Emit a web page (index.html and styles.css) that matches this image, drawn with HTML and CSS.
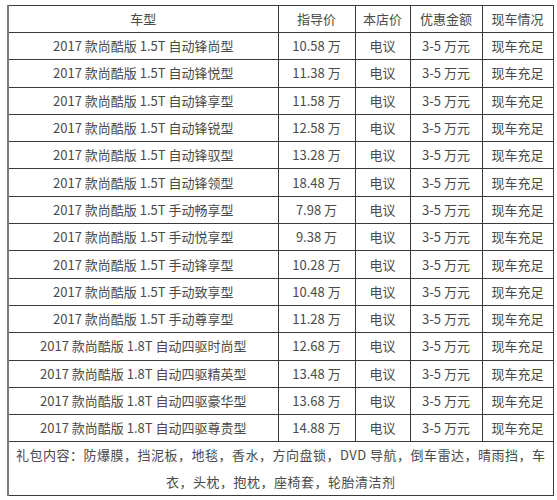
FILE: index.html
```html
<!DOCTYPE html>
<html lang="zh-CN">
<head>
<meta charset="utf-8">
<link rel="stylesheet" href="styles.css">
</head>
<body>
<table class="price-table">
  <colgroup>
    <col class="c-model"><col class="c-guide"><col class="c-store"><col class="c-off"><col class="c-stock">
  </colgroup>
  <thead>
    <tr class="head"><th>车型</th><th>指导价</th><th>本店价</th><th>优惠金额</th><th>现车情况</th></tr>
  </thead>
  <tbody>
    <tr><td>2017 款尚酷版 1.5T 自动锋尚型</td><td>10.58 万</td><td>电议</td><td>3-5 万元</td><td>现车充足</td></tr>
    <tr><td>2017 款尚酷版 1.5T 自动锋悦型</td><td>11.38 万</td><td>电议</td><td>3-5 万元</td><td>现车充足</td></tr>
    <tr><td>2017 款尚酷版 1.5T 自动锋享型</td><td>11.58 万</td><td>电议</td><td>3-5 万元</td><td>现车充足</td></tr>
    <tr><td>2017 款尚酷版 1.5T 自动锋锐型</td><td>12.58 万</td><td>电议</td><td>3-5 万元</td><td>现车充足</td></tr>
    <tr><td>2017 款尚酷版 1.5T 自动锋驭型</td><td>13.28 万</td><td>电议</td><td>3-5 万元</td><td>现车充足</td></tr>
    <tr><td>2017 款尚酷版 1.5T 自动锋领型</td><td>18.48 万</td><td>电议</td><td>3-5 万元</td><td>现车充足</td></tr>
    <tr><td>2017 款尚酷版 1.5T 手动畅享型</td><td>7.98 万</td><td>电议</td><td>3-5 万元</td><td>现车充足</td></tr>
    <tr><td>2017 款尚酷版 1.5T 手动悦享型</td><td>9.38 万</td><td>电议</td><td>3-5 万元</td><td>现车充足</td></tr>
    <tr><td>2017 款尚酷版 1.5T 手动锋享型</td><td>10.28 万</td><td>电议</td><td>3-5 万元</td><td>现车充足</td></tr>
    <tr><td>2017 款尚酷版 1.5T 手动致享型</td><td>10.48 万</td><td>电议</td><td>3-5 万元</td><td>现车充足</td></tr>
    <tr><td>2017 款尚酷版 1.5T 手动尊享型</td><td>11.28 万</td><td>电议</td><td>3-5 万元</td><td>现车充足</td></tr>
    <tr><td>2017 款尚酷版 1.8T 自动四驱时尚型</td><td>12.68 万</td><td>电议</td><td>3-5 万元</td><td>现车充足</td></tr>
    <tr><td>2017 款尚酷版 1.8T 自动四驱精英型</td><td>13.48 万</td><td>电议</td><td>3-5 万元</td><td>现车充足</td></tr>
    <tr><td>2017 款尚酷版 1.8T 自动四驱豪华型</td><td>13.68 万</td><td>电议</td><td>3-5 万元</td><td>现车充足</td></tr>
    <tr><td>2017 款尚酷版 1.8T 自动四驱尊贵型</td><td>14.88 万</td><td>电议</td><td>3-5 万元</td><td>现车充足</td></tr>
    <tr class="gift"><td colspan="5">礼包内容：防爆膜，挡泥板，地毯，香水，方向盘锁，DVD 导航，倒车雷达，晴雨挡，车<br>衣，头枕，抱枕，座椅套，轮胎清洁剂</td></tr>
  </tbody>
</table>
</body>
</html>
```

FILE: styles.css
```css
html, body {
  margin: 0;
  padding: 0;
  background: #fff;
}
body {
  padding: 5px 0 0 7px;
  font-family: "Noto Sans CJK SC", "Noto Sans", sans-serif;
  font-size: 13px;
  color: #4a4a4a;
}
.price-table {
  border-collapse: collapse;
  table-layout: fixed;
  width: 545px;
  border-left: 2px solid #7a7a7a;
  border-top: 1px solid #777;
}
.c-model { width: 270px; }
.c-guide { width: 77px; }
.c-store { width: 55px; }
.c-off { width: 72px; }
.c-stock { width: 71px; }
.price-table th,
.price-table td {
  border: 1px solid #3a3a3a;
  padding: 0;
  text-align: center;
  font-weight: normal;
  white-space: nowrap;
  line-height: 18px;
}
.price-table tr { height: 27.3px; }
.price-table tr.head { height: 27px; }
.price-table tr.gift td {
  white-space: normal;
  line-height: 26.5px;
  padding: 0 2px;
  letter-spacing: 0.5px;
}
```
